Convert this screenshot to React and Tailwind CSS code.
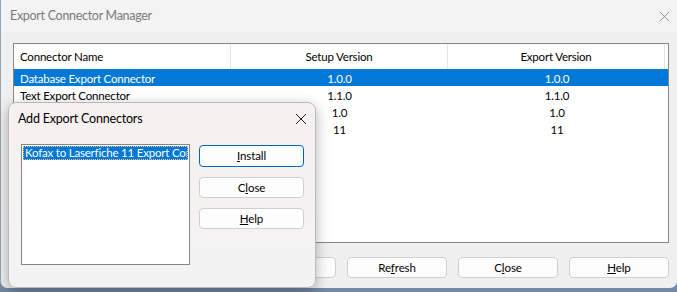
import React from 'react';

const font = { fontFamily: 'Lato, "Noto Sans", sans-serif' };

function CloseGlyph({ className }) {
	return (
		<svg viewBox="0 0 12 12" className={className} fill="none" stroke="currentColor" strokeWidth="1">
			<path d="M1 1 L11 11 M11 1 L1 11" />
		</svg>
	);
}

function Btn({ children, primary, className = '' }) {
	return (
		<div
			className={
				'flex items-center justify-center rounded-[4px] bg-[#fdfdfd] text-[11.5px] tracking-[-0.1px] text-black ' +
				(primary ? 'border border-[#0067c0] ' : 'border border-[#d0d0d0] ') +
				className
			}
		>
			{children}
		</div>
	);
}

// the last two names sit under the dialog, so they are left blank
const rows = [
	{ id: 1, name: 'Database Export Connector', setup: '1.0.0', exp: '1.0.0', selected: true },
	{ id: 2, name: 'Text Export Connector', setup: '1.1.0', exp: '1.1.0' },
	{ id: 3, name: '', setup: '1.0', exp: '1.0' },
	{ id: 4, name: '', setup: '11', exp: '11' },
];

export default function App() {
	return (
		<div className="relative w-[677px] h-[292px] overflow-hidden bg-[#7489a6]" style={font}>
			{/* main window */}
			<div className="h-[288px] w-[677px] rounded-b-[7px] border-l border-[#9aa4b0] bg-[#f0f0f0] flex flex-col">
				<div className="h-[32px] flex items-center justify-between pl-[9px] pr-[6px] bg-[#f3f3f3]">
					<span className="text-[12.5px] tracking-[-0.3px] text-[#7a7a7a]">Export Connector Manager</span>
					<CloseGlyph className="w-[11px] h-[11px] text-[#8a8a8a] mr-[1px]" />
				</div>

				<div className="pl-[12px] pt-[11px]">
					<div className="w-[656px] h-[200px] border border-[#828790] bg-white text-[11.5px] tracking-[-0.2px] text-black">
						<div className="grid grid-cols-[217px_217px_217px] h-[25px] items-stretch">
							<div className="flex items-center pl-[6px] pt-[1px] border-r border-[#e5e5e5]">Connector Name</div>
							<div className="flex items-center justify-center pt-[1px] border-r border-[#e5e5e5]">Setup Version</div>
							<div className="flex items-center justify-center pt-[1px] border-r border-[#e5e5e5]">Export Version</div>
						</div>
						{rows.map((r) => (
							<div
								key={r.id}
								className={
									'grid grid-cols-[217px_217px_218px] h-[17px] items-center pt-[2px] ' +
									(r.selected ? 'bg-[#0078d7] text-white' : '')
								}
							>
								<div className="pl-[6px] leading-none">{r.name}</div>
								<div className="text-center leading-none">{r.setup}</div>
								<div className="text-center leading-none">{r.exp}</div>
							</div>
						))}
					</div>
				</div>

				<div className="flex justify-end gap-[11px] pr-[8px] pt-[14px]">
					<Btn className="w-[100px] h-[21px]">Add...</Btn>
					<Btn className="w-[100px] h-[21px]">
						<span>
							Re<span className="underline">f</span>resh
						</span>
					</Btn>
					<Btn className="w-[100px] h-[21px]">
						<span>
							C<span className="underline">l</span>ose
						</span>
					</Btn>
					<Btn className="w-[100px] h-[21px]">
						<span>
							<span className="underline">H</span>elp
						</span>
					</Btn>
				</div>
			</div>

			{/* add export connectors dialog */}
			<div className="absolute left-[8px] top-[102px] w-[308px] h-[186px] rounded-[8px] border border-[#b9b9b9] bg-gradient-to-b from-[#f7f0f0] to-[#f3f3f3] shadow-[0_4px_14px_rgba(0,0,0,0.3)] flex flex-col">
				<div className="h-[32px] flex items-center justify-between pl-[9px] pr-[8px]">
					<span className="text-[12.5px] tracking-[-0.2px] text-black">Add Export Connectors</span>
					<CloseGlyph className="w-[12px] h-[12px] text-[#202020]" />
				</div>
				<div className="flex pl-[12px] pt-[9px] gap-[9px]">
					<div className="w-[169px] h-[121px] border border-[#828790] bg-white p-[1px] overflow-hidden">
						<div className="h-[14px] bg-[#0078d7] border border-dotted border-[#f0c080] text-white text-[11.5px] tracking-[-0.2px] leading-[12px] whitespace-nowrap overflow-hidden pl-[1px]">
							Kofax to Laserfiche 11 Export Connector
						</div>
					</div>
					<div className="flex flex-col gap-[10px] pt-[1px]">
						<Btn primary className="w-[105px] h-[22px]">
							<span>
								<span className="underline">I</span>nstall
							</span>
						</Btn>
						<Btn className="w-[105px] h-[21px]">
							<span>
								C<span className="underline">l</span>ose
							</span>
						</Btn>
						<Btn className="w-[105px] h-[21px]">
							<span>
								<span className="underline">H</span>elp
							</span>
						</Btn>
					</div>
				</div>
			</div>
		</div>
	);
}
